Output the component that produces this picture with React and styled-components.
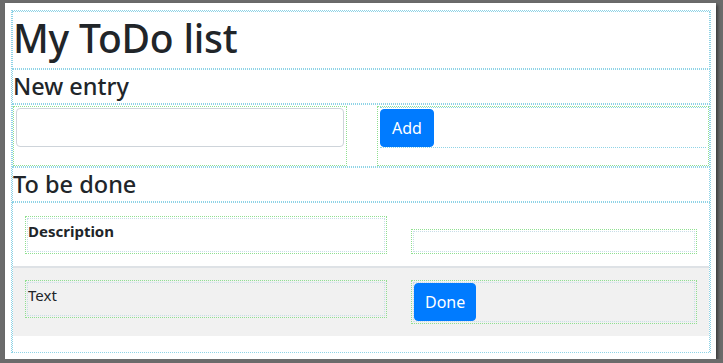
import styled, { createGlobalStyle } from "styled-components";

const GlobalStyle = createGlobalStyle`
  html, body {
    margin: 0;
    padding: 0;
    background: #6b6b6b;
    font-family: "Noto Sans", "Open Sans", sans-serif;
    color: #212529;
  }
`;

const Window = styled.div`
  margin: 3px 0 0 5px;
  width: 711px;
  height: 356px;
  box-sizing: border-box;
  background: #fff;
  padding: 7px 6px 0 6px;
  box-shadow: 2px 2px 3px rgba(0, 0, 0, 0.45);
`;

const Container = styled.div`
  width: 700px;
  height: 343px;
  box-sizing: border-box;
  border: 1px dotted #8fd3e6;
  display: flex;
  flex-direction: column;
`;

const Row = styled.div`
  border: 1px dotted #8fd3e6;
  box-sizing: border-box;
  height: ${(p) => p.$h}px;
  display: flex;
  align-items: center;
`;

const Title = styled.h1`
  margin: -3px 0 0 0;
  font-size: 39px;
  font-weight: 500;
  line-height: 1.2;
  letter-spacing: -0.2px;
`;

const Heading = styled.h2`
  margin: 0;
  font-size: 23.5px;
  font-weight: 500;
  line-height: 1.2;
`;

const FormRow = styled.div`
  display: grid;
  grid-template-columns: 334px 1fr;
  column-gap: 30px;
  border: 1px dotted #8fd3e6;
  padding-top: 1px;
  height: 64px;
  box-sizing: border-box;
`;

const Col = styled.div`
  border: 1px dotted #90e090;
  box-sizing: border-box;
  padding: 0 2px 1px 2px;
`;

const InnerBox = styled.div`
  border-bottom: 1px dotted #8fd3e6;
  border-top: 1px dotted #8fd3e6;
  height: 41px;
  padding-top: 1px;
  box-sizing: border-box;
`;

const TextInput = styled.input`
  display: block;
  width: 328px;
  height: 39px;
  box-sizing: border-box;
  border: 1px solid #ced4da;
  border-radius: 4px;
  margin: 1px 0 0 0;
  padding: 6px 12px;
  font: inherit;
`;

const Button = styled.button`
  background: #007bff;
  color: #fff;
  border: 1px solid #007bff;
  border-radius: 4px;
  height: 38px;
  padding: 0 ${(p) => p.$px || 12}px;
  font-family: inherit;
  font-size: 16px;
  cursor: pointer;
`;

const TableWrap = styled.div`
  border: 1px dotted #8fd3e6;
  border-bottom: none;
  flex: 1;
`;

const Table = styled.table`
  width: 100%;
  border-collapse: collapse;
  margin-bottom: 16px;
`;

const HeadRow = styled.tr`
  border-bottom: 2px solid #dee2e6;
`;

const StripedRow = styled.tr`
  background: #f1f1f1;
`;

const Th = styled.th`
  padding: 13px 12px 12px 12px;
  vertical-align: bottom;
  text-align: left;
  width: ${(p) => p.$w || "auto"};
`;

const Td = styled.td`
  padding: 12px;
  vertical-align: top;
  width: ${(p) => p.$w || "auto"};
`;

const Cell = styled.div`
  border: 1px dotted #90e090;
  outline: 1px dotted #c8dde8;
  outline-offset: -3px;
  box-sizing: border-box;
  height: ${(p) => p.$h}px;
  padding: 4px 2px 2px 2px;
  font-size: 15px;
  font-weight: ${(p) => (p.$bold ? 700 : 400)};
`;

const ButtonCell = styled(Cell)`
  padding: 2px;
`;

export default function App() {
  return (
    <>
      <GlobalStyle />
      <Window>
        <Container>
          <Row $h={58}>
            <Title>My ToDo list</Title>
          </Row>
          <Row $h={35}>
            <Heading>New entry</Heading>
          </Row>
          <FormRow>
            <Col>
              <TextInput type="text" />
            </Col>
            <Col>
              <InnerBox>
                <Button $px={11}>Add</Button>
              </InnerBox>
            </Col>
          </FormRow>
          <Row $h={35}>
            <Heading>To be done</Heading>
          </Row>
          <TableWrap>
            <Table>
              <thead>
                <HeadRow>
                  <Th $w="362px">
                    <Cell $h={38} $bold>Description</Cell>
                  </Th>
                  <Th>
                    <Cell $h={25} />
                  </Th>
                </HeadRow>
              </thead>
              <tbody>
                <StripedRow>
                  <Td $w="362px">
                    <Cell $h={38}>Text</Cell>
                  </Td>
                  <Td>
                    <ButtonCell $h={44}>
                      <Button $px={10}>Done</Button>
                    </ButtonCell>
                  </Td>
                </StripedRow>
              </tbody>
            </Table>
          </TableWrap>
        </Container>
      </Window>
    </>
  );
}
